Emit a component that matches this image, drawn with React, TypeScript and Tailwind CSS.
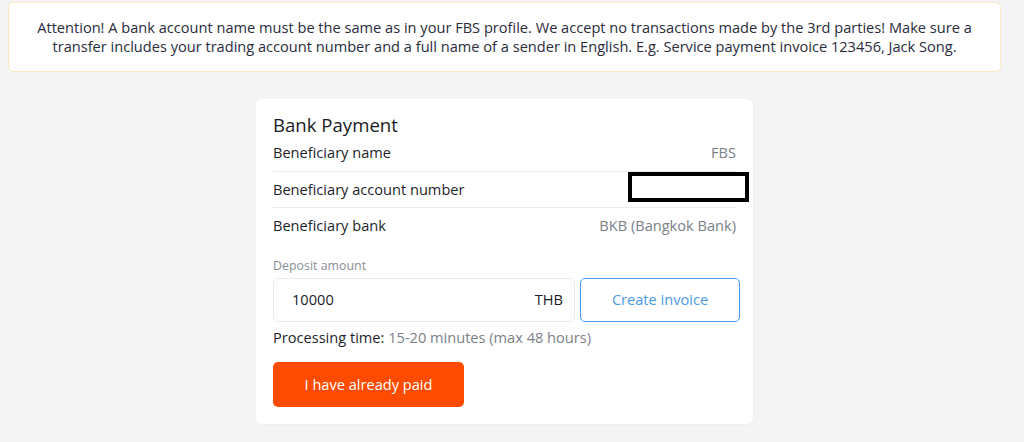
import React from 'react';

const rows = [
    { label: 'Beneficiary name', value: 'FBS' },
    { label: 'Beneficiary account number', value: '', hidden: true },
    { label: 'Beneficiary bank', value: 'BKB (Bangkok Bank)' },
];

const App = () => {
    return (
        <div className="min-h-[442px] bg-[#f4f4f4] pl-2 pr-[23px] pt-[2px] pb-4 font-['Open_Sans',sans-serif] text-[#1e1f2b]">
            <div className="rounded-[5px] border border-[#fbe8c4] bg-white px-[20px] py-[15px] text-center text-[14.6px] leading-[19px] text-[#2a2c3c]">
                Attention! A bank account name must be the same as in your FBS profile. We accept no transactions made by the 3rd parties! Make sure a transfer includes your trading account number and a full name of a sender in English. E.g. Service payment invoice 123456, Jack Song.
            </div>

            <div className="mx-auto mt-[27px] w-[497px] rounded-[6px] bg-white px-[17px] pt-[15px] pb-[17px] shadow-[0_1px_2px_rgba(0,0,0,0.03)]">
                <h2 className="text-[18.6px] leading-[21px] text-[#1a1b26]">Bank Payment</h2>

                <div className="flex flex-col">
                    {rows.map((row, i) => (
                        <div
                            key={row.label}
                            className={`relative flex h-[36px] items-center justify-between text-[14.6px] leading-[20px] ${i > 0 ? 'border-t border-[#ececec]' : ''}`}
                        >
                            <span className="-mt-[2px] text-[#1e1f2b]">{row.label}</span>
                            <span className="-mt-[2px] text-[#7a7f8a]">{row.value}</span>
                            {row.hidden && (
                                <div className="absolute right-[-13px] top-0 h-[30px] w-[121px] border-[4px] border-black bg-white" />
                            )}
                        </div>
                    ))}
                </div>

                <div className="mt-[15px] text-[12.4px] leading-[16px] text-[#8a8e98]">Deposit amount</div>

                <div className="mt-[4px] flex gap-[5px]">
                    <div className="flex h-[44px] w-[302px] shrink-0 items-center justify-between rounded-[4px] border border-[#ececec] pl-[18px] pr-[11px] text-[14.6px]">
                        <span className="text-[#1a1b26]">10000</span>
                        <span className="text-[#1a1b26]">THB</span>
                    </div>
                    <button className="h-[44px] w-[160px] shrink-0 rounded-[5px] border border-[#4a9be8] bg-white text-[14.6px] text-[#4a9be8]">
                        Create invoice
                    </button>
                </div>

                <p className="mt-[5px] text-[14.6px] leading-[20px]">
                    <span className="text-[#1e1f2b]">Processing time: </span>
                    <span className="text-[#7a7f8a]">15-20 minutes (max 48 hours)</span>
                </p>

                <button className="mt-[15px] h-[45px] w-[191px] rounded-[5px] bg-[#ff4b00] text-[14.6px] text-white">
                    I have already paid
                </button>
            </div>
        </div>
    );
};

export default App;
